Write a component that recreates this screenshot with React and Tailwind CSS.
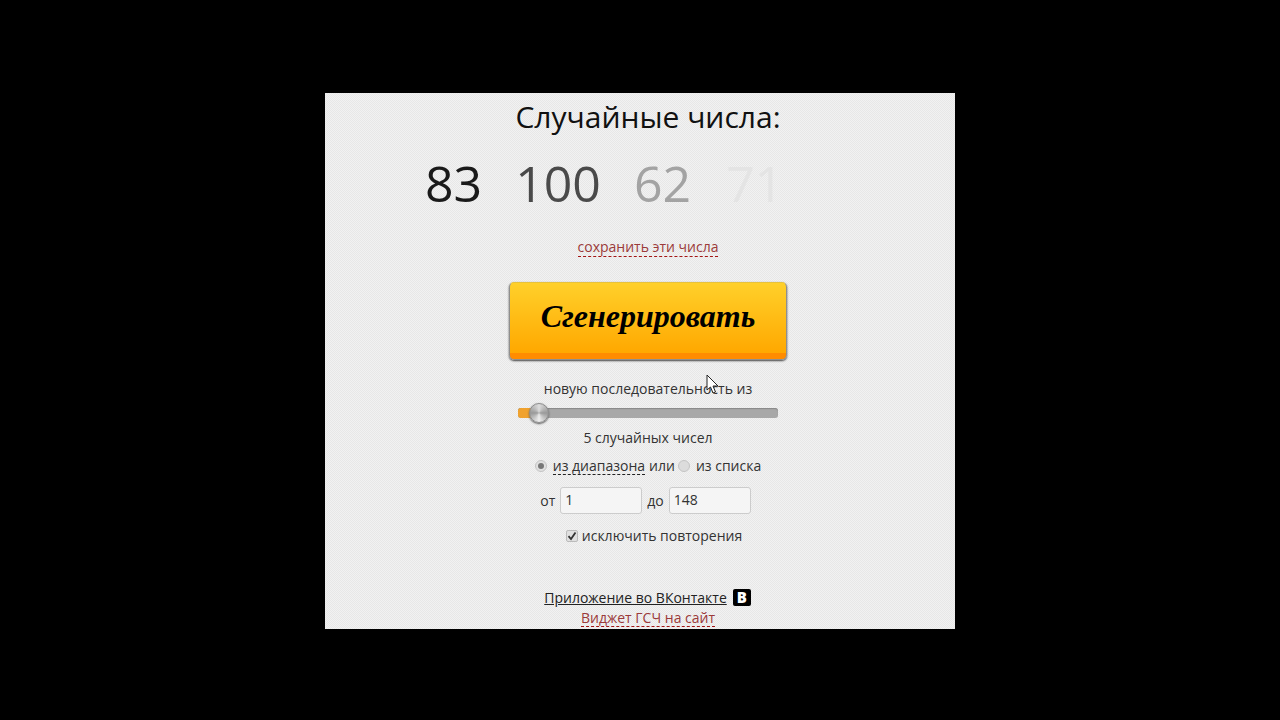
const numbers = [
  { value: 83, color: "text-[#1a1a1a]" },
  { value: 100, color: "text-[#4a4a4a]" },
  { value: 62, color: "text-[#a3a3a3]" },
  { value: 71, color: "text-[#e4e4e4] ml-[2px]" },
];

const App = () => {
  return (
    <div className="bg-black w-full h-screen flex items-start justify-center pt-[93px] overflow-hidden font-['Open_Sans',sans-serif]">
      {/* main panel */}
      <div className="relative w-[630px] h-[536px] overflow-hidden pl-4 flex flex-col items-center text-[14px] text-[#333] bg-[#ededed] bg-[repeating-conic-gradient(#f2f2f2_0_25%,#e7e7e7_0_50%)] bg-[length:2px_2px]">
        <h1 className="text-[30px] leading-[38px] mt-[5px] text-[#111]">
          Случайные числа:
        </h1>

        <div className="w-full flex gap-[33px] pl-[84px] mt-[14px] text-[50px] leading-[66px] h-[66px]">
          {numbers.map((n) => (
            <span key={n.value} className={n.color}>
              {n.value}
            </span>
          ))}
        </div>

        <a className="mt-[21px] leading-[19px] text-[#9b3a3a] border-b border-dashed border-[#a31515]">
          сохранить эти числа
        </a>

        {/* generate button */}
        <button className="mt-[25px] w-[278px] h-[78px] rounded-[5px] border border-[#8f8f8f] border-t-[#e8c23a] bg-[linear-gradient(#ffd02a,#ffa800_92%,#ff8c00_92%,#ff8c00)] shadow-[0_1px_2px_#444] flex items-center justify-center pb-[10px]">
          <span className="font-['Liberation_Serif',serif] font-bold italic text-[32px] leading-none text-black">
            Сгенерировать
          </span>
        </button>

        <div className="mt-[19px] leading-[19px]">новую последовательность из</div>

        {/* slider */}
        <div className="relative mt-[10px] w-[260px] h-[10px] rounded-[3px] bg-[#a8a8a8] shadow-[inset_0_1px_1px_#888]">
          <div className="w-[22px] h-full rounded-l-[3px] bg-[#f0a22e]"></div>
          <div className="absolute left-[11px] top-[-5px] w-[20px] h-[20px] rounded-full border border-[#8c8c8c] bg-[conic-gradient(#ddd,#999,#eee,#999,#ddd)] shadow-[0_1px_2px_#555]"></div>
        </div>

        <div className="mt-[10px] leading-[19px]">5 случайных чисел</div>

        <div className="mt-[9px] flex items-center leading-[19px]">
          <span className="w-[12px] h-[12px] rounded-full border border-[#c4c4c4] bg-[#e0e0e0] flex items-center justify-center mr-[6px]">
            <span className="w-[6px] h-[6px] rounded-full bg-[#777]"></span>
          </span>
          <span className="border-b border-dashed border-[#222] leading-[17px] mr-[4px]">из диапазона</span>
          <span>или</span>
          <span className="w-[12px] h-[12px] rounded-full border border-[#c4c4c4] bg-[#dcdcdc] ml-[3px] mr-[6px]"></span>
          <span>из списка</span>
        </div>

        <div className="mt-[12px] ml-[-5px] flex items-center gap-[5px]">
          <span>от</span>
          <div className="w-[82px] h-[27px] rounded-[3px] border border-[#ccc] bg-[#f5f5f5] pl-[4px] leading-[24px]">1</div>
          <span>до</span>
          <div className="w-[82px] h-[27px] rounded-[3px] border border-[#ccc] bg-[#f5f5f5] pl-[4px] leading-[24px]">148</div>
        </div>

        <div className="mt-[12px] ml-[12px] flex items-center leading-[19px]">
          <span className="w-[12px] h-[12px] rounded-[2px] border border-[#bbb] bg-[#e0e0e0] flex items-center justify-center mr-[4px]">
            <svg width="10" height="10" viewBox="0 0 10 10" fill="none">
              <path d="M1.5 5.2 L4 8 L8.5 1.5" stroke="#333" strokeWidth="1.8" />
            </svg>
          </span>
          <span>исключить повторения</span>
        </div>

        <div className="mt-[43px] flex items-center leading-[19px] ml-[-1px]">
          <a className="underline text-[#222] mr-[6px]">Приложение во ВКонтакте</a>
          <span className="w-[18px] h-[17px] rounded-[2px] bg-black text-white text-[15px] leading-[17px] font-extrabold text-center">
            B
          </span>
        </div>

        <a className="mt-[2px] leading-[17px] text-[#9b3a3a] border-b border-dashed border-[#a31515]">
          Виджет ГСЧ на сайт
        </a>

        {/* mouse cursor */}
        <svg className="absolute left-[381px] top-[281px]" width="14" height="21" viewBox="0 0 14 21">
          <path d="M1 1 L1 16 L4.5 13 L7 19 L9.5 18 L7 12 L12 12 Z" fill="#fff" stroke="#222" strokeWidth="1" />
        </svg>
      </div>
    </div>
  );
};

export default App;
